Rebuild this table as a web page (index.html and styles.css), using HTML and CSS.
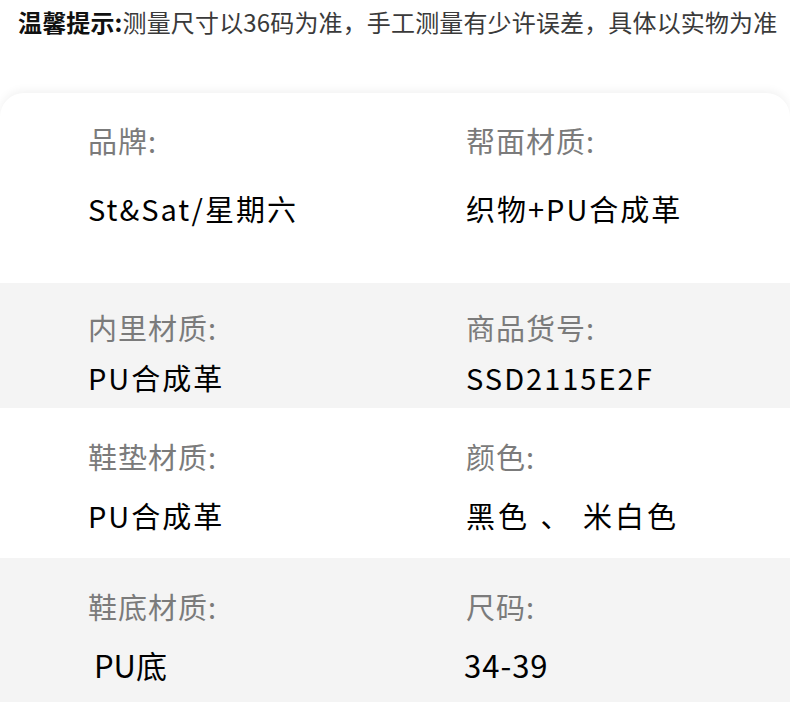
FILE: index.html
```html
<!DOCTYPE html>
<html lang="zh-CN">
<head>
<meta charset="utf-8">
<title>商品参数</title>
<link rel="stylesheet" href="styles.css">
</head>
<body>
<div class="notice"><b class="notice-title">温馨提示:</b><span class="notice-text">测量尺寸以36码为准，手工测量有少许误差，具体以实物为准</span></div>
<section class="card">
  <div class="row row-1">
    <div class="cell"><div class="label">品牌:</div><div class="value">St&amp;Sat/星期六</div></div>
    <div class="cell"><div class="label">帮面材质:</div><div class="value">织物+PU合成革</div></div>
  </div>
  <div class="row row-2 shaded">
    <div class="cell"><div class="label">内里材质:</div><div class="value">PU合成革</div></div>
    <div class="cell"><div class="label">商品货号:</div><div class="value">SSD2115E2F</div></div>
  </div>
  <div class="row row-3">
    <div class="cell"><div class="label">鞋垫材质:</div><div class="value">PU合成革</div></div>
    <div class="cell"><div class="label">颜色:</div><div class="value wide">黑色 、 米白色</div></div>
  </div>
  <div class="row row-4 shaded">
    <div class="cell"><div class="label">鞋底材质:</div><div class="value shifted">PU底</div></div>
    <div class="cell"><div class="label">尺码:</div><div class="value tight">34-39</div></div>
  </div>
</section>
</body>
</html>
```
FILE: styles.css
```css
html, body {
  margin: 0;
  padding: 0;
  background: #ffffff;
}
body {
  width: 790px;
  font-family: "Noto Sans CJK SC", "Noto Sans", sans-serif;
  overflow: hidden;
}
.notice {
  height: 44px;
  line-height: 44px;
  padding-left: 18px;
  font-size: 24px;
  letter-spacing: 0.15px;
  white-space: nowrap;
  color: #3a3a3a;
}
.notice-title {
  font-weight: 700;
  color: #111;
}
.card {
  margin-top: 49px;
  background: #fff;
  border-radius: 24px 24px 0 0;
  box-shadow: 0 -3px 8px rgba(0, 0, 0, 0.05);
  overflow: hidden;
}
.row {
  display: grid;
  grid-template-columns: 378px 1fr;
  padding-left: 88px;
  box-sizing: border-box;
}
.shaded {
  background: #f4f4f4;
}
.row-1 { height: 190px; padding-top: 27px; }
.row-1 .value { margin-top: 28px; }
.row-2 { height: 125px; padding-top: 24px; }
.row-2 .value { margin-top: 10px; }
.row-3 { height: 150px; padding-top: 28px; }
.row-3 .value { margin-top: 19px; }
.row-4 { height: 144px; padding-top: 28px; }
.row-4 .value { margin-top: 19px; font-size: 31px; }
.label {
  font-size: 29px;
  line-height: 40px;
  color: #7b7b7b;
  letter-spacing: 1px;
}
.value {
  font-size: 29px;
  line-height: 40px;
  font-weight: 400;
  color: #000;
  letter-spacing: 2px;
  white-space: nowrap;
}
.value.wide {
  word-spacing: 1px;
  letter-spacing: 3px;
}
.value.shifted {
  margin-left: 6px;
  letter-spacing: 0;
}
.value.tight {
  margin-left: -2px;
  letter-spacing: 1px;
}
```
